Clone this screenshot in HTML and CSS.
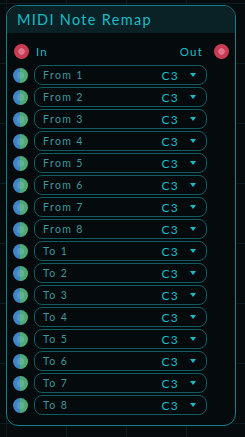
FILE: index.html
```html
<!DOCTYPE html>
<html lang="en">
<head>
    <meta charset="UTF-8">
    <meta name="viewport" content="width=device-width, initial-scale=1.0">
    <title>MIDI Note Remap</title>
    <link rel="stylesheet" href="styles.css">
</head>
<body>
    <!-- node -->
    <div class="node">
        <div class="node-header">MIDI Note Remap</div>

        <div class="node-body">
            <!-- in / out ports -->
            <div class="io-row">
                <span class="port port-red"></span>
                <span class="io-label">In</span>
                <span class="io-label io-out">Out</span>
                <span class="port port-red"></span>
            </div>

            <div class="param-list">
                <div class="param-row"><span class="port port-mix"></span><div class="select"><span class="select-name">From 1</span><span class="select-value">C3</span><span class="select-arrow"></span></div></div>
                <div class="param-row"><span class="port port-mix"></span><div class="select"><span class="select-name">From 2</span><span class="select-value">C3</span><span class="select-arrow"></span></div></div>
                <div class="param-row"><span class="port port-mix"></span><div class="select"><span class="select-name">From 3</span><span class="select-value">C3</span><span class="select-arrow"></span></div></div>
                <div class="param-row"><span class="port port-mix"></span><div class="select"><span class="select-name">From 4</span><span class="select-value">C3</span><span class="select-arrow"></span></div></div>
                <div class="param-row"><span class="port port-mix"></span><div class="select"><span class="select-name">From 5</span><span class="select-value">C3</span><span class="select-arrow"></span></div></div>
                <div class="param-row"><span class="port port-mix"></span><div class="select"><span class="select-name">From 6</span><span class="select-value">C3</span><span class="select-arrow"></span></div></div>
                <div class="param-row"><span class="port port-mix"></span><div class="select"><span class="select-name">From 7</span><span class="select-value">C3</span><span class="select-arrow"></span></div></div>
                <div class="param-row"><span class="port port-mix"></span><div class="select"><span class="select-name">From 8</span><span class="select-value">C3</span><span class="select-arrow"></span></div></div>
                <div class="param-row"><span class="port port-mix"></span><div class="select"><span class="select-name">To 1</span><span class="select-value">C3</span><span class="select-arrow"></span></div></div>
                <div class="param-row"><span class="port port-mix"></span><div class="select"><span class="select-name">To 2</span><span class="select-value">C3</span><span class="select-arrow"></span></div></div>
                <div class="param-row"><span class="port port-mix"></span><div class="select"><span class="select-name">To 3</span><span class="select-value">C3</span><span class="select-arrow"></span></div></div>
                <div class="param-row"><span class="port port-mix"></span><div class="select"><span class="select-name">To 4</span><span class="select-value">C3</span><span class="select-arrow"></span></div></div>
                <div class="param-row"><span class="port port-mix"></span><div class="select"><span class="select-name">To 5</span><span class="select-value">C3</span><span class="select-arrow"></span></div></div>
                <div class="param-row"><span class="port port-mix"></span><div class="select"><span class="select-name">To 6</span><span class="select-value">C3</span><span class="select-arrow"></span></div></div>
                <div class="param-row"><span class="port port-mix"></span><div class="select"><span class="select-name">To 7</span><span class="select-value">C3</span><span class="select-arrow"></span></div></div>
                <div class="param-row"><span class="port port-mix"></span><div class="select"><span class="select-name">To 8</span><span class="select-value">C3</span><span class="select-arrow"></span></div></div>
            </div>
        </div>
    </div>
</body>
</html>
```

FILE: styles.css
```css
* {
    margin: 0;
    padding: 0;
    box-sizing: border-box;
}

body {
    font-family: 'Lato', 'Open Sans', sans-serif;
    background-color: #060b0d;
    background-image:
        linear-gradient(#0e1d21 1px, transparent 1px),
        linear-gradient(90deg, #0e1d21 1px, transparent 1px);
    background-size: 60px 60px;
    background-position: 6px 3px;
    height: 100vh;
    overflow: hidden;
    padding: 5px 0 0 6px;
}

/* node */
.node {
    width: 230px;
    height: 421px;
    border: 1px solid #137f89;
    border-radius: 12px;
    background: #050b0d;
    overflow: hidden;
    display: flex;
    flex-direction: column;
}

.node-header {
    height: 27px;
    background: #0a2225;
    color: #17bcc8;
    font-size: 14.5px;
    letter-spacing: 1.3px;
    padding: 6px 0 0 10px;
    line-height: 16px;
}

.node-body {
    padding: 11px 0 0 6px;
}

/* ports */
.port {
    display: block;
    width: 15px;
    height: 15px;
    border-radius: 50%;
    flex-shrink: 0;
}

.port-red {
    background: radial-gradient(circle, #de7389 0 3px, #c93b52 3.5px);
}

.port-mix {
    background:
        radial-gradient(circle, rgba(255, 255, 255, 0.12) 0 3.5px, transparent 4px),
        linear-gradient(90deg, #3e85c6 50%, #4daa78 50%);
}

.io-row {
    display: flex;
    align-items: center;
    height: 15px;
    padding-left: 1px;
    padding-right: 6px;
    margin-bottom: 6px;
}

.io-label {
    color: #17bcc8;
    font-size: 11.5px;
    letter-spacing: 1.2px;
    margin-left: 7px;
}

.io-out {
    margin-left: auto;
    margin-right: 11px;
}

/* selects */
.param-list {
    display: flex;
    flex-direction: column;
    gap: 2px;
}

.param-row {
    display: flex;
    align-items: center;
    gap: 6px;
}

.select {
    width: 173px;
    height: 20px;
    border: 1px solid #0f5c63;
    border-radius: 8px;
    display: flex;
    align-items: center;
    padding: 0 10px 0 8px;
}

.select-name {
    color: #3d969c;
    font-size: 10.5px;
    letter-spacing: 1.4px;
}

.select-value {
    margin-left: auto;
    color: #17bcc8;
    font-size: 12px;
    letter-spacing: 1.2px;
}

.select-arrow {
    width: 0;
    height: 0;
    border-left: 3.5px solid transparent;
    border-right: 3.5px solid transparent;
    border-top: 4px solid #17bcc8;
    margin-left: 11px;
}
```
